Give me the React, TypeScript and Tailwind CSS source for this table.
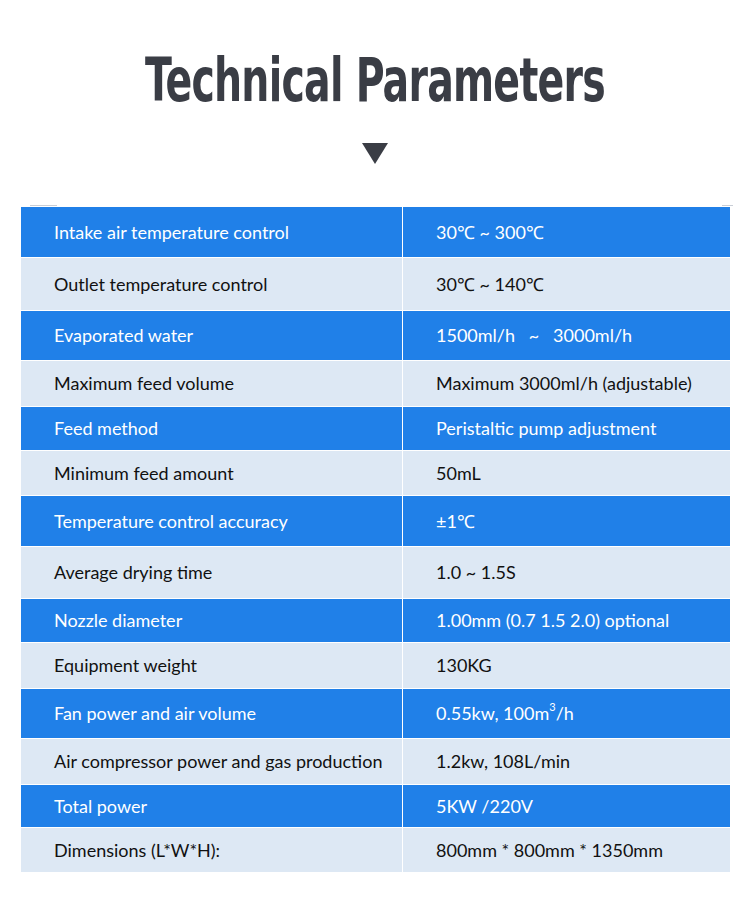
import type React from 'react';

/* ── Data ─────────────────────────────────────────────── */
interface Param {
  label: string;
  value: React.ReactNode;
  h: string;
}

const params: Param[] = [
  { label: 'Intake air temperature control', value: '30℃ ~ 300℃', h: 'h-[50px]' },
  { label: 'Outlet temperature control', value: '30℃ ~ 140℃', h: 'h-[53px]' },
  { label: 'Evaporated water', value: '1500ml/h   ~   3000ml/h', h: 'h-[50px]' },
  { label: 'Maximum feed volume', value: 'Maximum 3000ml/h (adjustable)', h: 'h-[46px]' },
  { label: 'Feed method', value: 'Peristaltic pump adjustment', h: 'h-[44px]' },
  { label: 'Minimum feed amount', value: '50mL', h: 'h-[45px]' },
  { label: 'Temperature control accuracy', value: '±1℃', h: 'h-[51px]' },
  { label: 'Average drying time', value: '1.0 ~ 1.5S', h: 'h-[52px]' },
  { label: 'Nozzle diameter', value: '1.00mm (0.7 1.5 2.0) optional', h: 'h-[44px]' },
  { label: 'Equipment weight', value: '130KG', h: 'h-[46px]' },
  {
    label: 'Fan power and air volume',
    value: (
      <>
        0.55kw, 100m<sup className="text-[11px] -top-[7px]">3</sup>/h
      </>
    ),
    h: 'h-[50px]',
  },
  { label: 'Air compressor power and gas production', value: '1.2kw, 108L/min', h: 'h-[46px]' },
  { label: 'Total power', value: '5KW /220V', h: 'h-[43px]' },
  { label: 'Dimensions (L*W*H):', value: '800mm * 800mm * 1350mm', h: 'h-[45px]' },
];

/* ── Page ──────────────────────────────────────────────── */
export default function App(): React.ReactElement {
  return (
    <div className="w-[750px] h-[903px] bg-white font-['Lato','Open_Sans',sans-serif]">
      {/* Header */}
      <div className="flex flex-col items-center pt-[45px]">
        <h1 className="font-['DejaVu_Sans_Condensed','DejaVu_Sans',sans-serif] font-bold text-[60px] leading-[70px] tracking-[-1px] text-[#3a3d45] scale-x-[0.73] whitespace-nowrap">
          Technical Parameters
        </h1>
        <svg width="26" height="21" viewBox="0 0 26 21" className="mt-[28px]">
          <polygon points="0,0 26,0 13,21" fill="#3a3d45" />
        </svg>
      </div>

      {/* Corner marks */}
      <div className="flex justify-between mt-[41px] h-[2px]">
        <div className="ml-[30px] w-[27px] h-px bg-[#c9ced6]" />
        <div className="mr-[17px] w-[11px] h-px bg-[#c9ced6]" />
      </div>

      {/* Table */}
      <div className="mx-[21px] w-[709px] flex flex-col">
        {params.map((p, i) => {
          const blue = i % 2 === 0;
          return (
            <div
              key={p.label}
              className={`flex ${p.h} ${i > 0 ? 'border-t border-white' : ''} ${
                blue ? 'bg-[#2080e8] text-white' : 'bg-[#dde8f4] text-[#111]'
              } text-[18px]`}
            >
              <div className="w-[382px] flex items-center pl-[33px] border-r border-white">{p.label}</div>
              <div className="flex-1 flex items-center pl-[33px] whitespace-pre">{p.value}</div>
            </div>
          );
        })}
      </div>
    </div>
  );
}
